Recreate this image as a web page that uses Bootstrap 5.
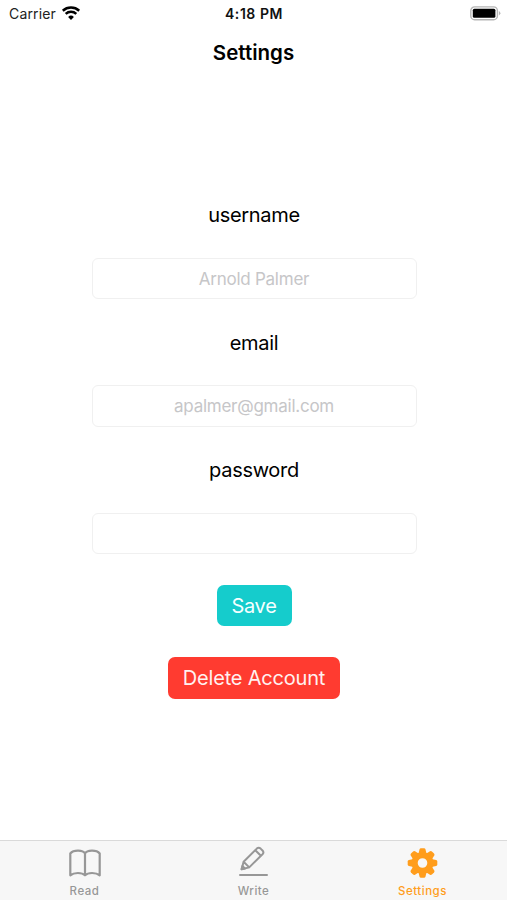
<!DOCTYPE html>
<html lang="en">
<head>
<meta charset="utf-8">
<meta name="viewport" content="width=device-width, initial-scale=1">
<title>Settings</title>
<link href="https://cdn.jsdelivr.net/npm/bootstrap@5.3.0/dist/css/bootstrap.min.css" rel="stylesheet">
<style>
body { font-family: Inter, "Liberation Sans", sans-serif; color: #000; background: #fff; }
.app { height: 900px; overflow: hidden; }
.status-bar { height: 28px; padding: 0 6px 0 9px; font-size: 14px; line-height: 28px; color: #222; }
.carrier { letter-spacing: .15px; }
.clock { margin-left: -2px; font-weight: 600; letter-spacing: .55px; color: #111; }
.title-bar { height: 48px; padding-top: 1px; font-size: 20.5px; font-weight: 600; line-height: 47px; letter-spacing: 0; }
.settings-form { padding: 126.4px 0 0 1px; gap: 30.6px; }
.field-label { height: 24.7px; padding-top: 2px; font-size: 20px; line-height: 23.7px; letter-spacing: -.3px; }
.field-input { width: 325px; height: 41.6px; padding: 1px 8px 0; font-size: 17px; letter-spacing: -.25px; border: 1.5px solid #f0f0f0; border-radius: 6px; }
.field-input::placeholder { color: #c6c6c8; }
.btn-form { height: 41.6px; padding: 1px 14px 0; font-size: 20px; line-height: 41.6px; border: 0; border-radius: 7px; color: #f4ffff; }
.btn-save { width: 75px; background: #15cccc; letter-spacing: -.3px; }
.btn-remove { width: 172px; background: #ff3b30; color: #fff1f0; letter-spacing: -.2px; }
.tab-bar { height: 60px; background: #f7f7f7; border-top: 1px solid #dadada; }
.tab-item { color: #979797; font-size: 11.5px; font-weight: 500; line-height: 14px; letter-spacing: .5px; padding-top: 5px; }
.tab-item svg { width: 36px; height: 36px; margin-bottom: 2px; }
.tab-item.active { color: #ff9d1c; }
</style>
<script src="https://cdn.jsdelivr.net/npm/bootstrap@5.3.0/dist/js/bootstrap.bundle.min.js"></script>
</head>
<body>
<div class="app d-flex flex-column">
  <header>
    <div class="status-bar row g-0">
      <div class="col d-flex align-items-center">
        <span class="carrier">Carrier</span>
        <svg class="ms-1" width="22" height="16" viewBox="0 0 22 16" fill="none" stroke="#000" stroke-width="2.5"><path d="M2.8 4.7a12.2 12.2 0 0 1 16.4 0M5.7 7.9a7.8 7.8 0 0 1 10.6 0"/><path d="M11 13.9l-2.9-3a4.3 4.3 0 0 1 5.8 0z" fill="#000" stroke="none"/></svg>
      </div>
      <div class="col-auto clock">4:18 PM</div>
      <div class="col d-flex align-items-center justify-content-end">
        <svg width="32" height="16" viewBox="0 0 32 16"><g transform="translate(.6 -.7)"><rect x="1.2" y="1.6" width="26.6" height="12.8" rx="3.8" fill="#fff" stroke="#b5b5b5" stroke-width="1.4"/><rect x="3.2" y="3.5" width="22.6" height="9" rx="1.5" fill="#000"/><path d="M29.3 5.8q3 2.2 0 4.4z" fill="#b5b5b5"/></g></svg>
      </div>
    </div>
    <h1 class="title-bar text-center m-0">Settings</h1>
  </header>
  <main class="flex-grow-1">
    <form class="settings-form d-flex flex-column align-items-center">
      <label class="field-label" for="username">username</label>
      <input class="field-input form-control text-center" id="username" type="text" placeholder="Arnold Palmer">
      <label class="field-label" for="email">email</label>
      <input class="field-input form-control text-center" id="email" type="email" placeholder="apalmer@gmail.com">
      <label class="field-label" for="password">password</label>
      <input class="field-input form-control text-center" id="password" type="password">
      <button class="btn btn-form btn-save text-nowrap" type="button">Save</button>
      <button class="btn btn-form btn-remove text-nowrap" type="button">Delete Account</button>
    </form>
  </main>
  <nav class="tab-bar row g-0">
    <a class="tab-item col d-flex flex-column align-items-center text-decoration-none" href="#">
      <svg viewBox="0 0 36 36" fill="none" stroke="currentColor" stroke-width="2.2" stroke-linejoin="round"><path d="M18 7.5C16 3.8 6.5 3.5 3.3 7.5V29.3C7 26.2 15 26.2 18 29.3C21 26.2 29 26.2 32.7 29.3V7.5C29.5 3.5 20 3.8 18 7.5zM18 7.5V29"/></svg>
      <span>Read</span>
    </a>
    <a class="tab-item col d-flex flex-column align-items-center text-decoration-none" href="#">
      <svg viewBox="0 0 36 36" fill="none" stroke="currentColor" stroke-width="2" stroke-linejoin="round" stroke-linecap="round"><path d="M5.6 23.3L7.6 15.8L20.8 2.6Q22.7 .8 24.6 2.6L26.5 4.5Q28.3 6.4 26.5 8.3L13.2 21.4zM19.3 4.2L24.9 9.8M7.6 15.8L13.2 21.4M4 29H31"/><path d="M5.6 23.3L6.4 20L8.9 22.5z" fill="currentColor"/></svg>
      <span>Write</span>
    </a>
    <a class="tab-item active col d-flex flex-column align-items-center text-decoration-none" href="#">
      <svg viewBox="0 0 36 36" fill="currentColor"><defs><path id="tooth" d="M13.4 8L14.5 3.4Q14.8 2.2 16 2.2H19Q20.2 2.2 20.5 3.4L21.6 8z"/></defs><path fill-rule="evenodd" d="M17.5 6.2a10.8 10.8 0 1 0 0 21.6a10.8 10.8 0 1 0 0-21.6zM17.5 12.2a4.8 4.8 0 1 1 0 9.6a4.8 4.8 0 1 1 0-9.6z"/><use href="#tooth"/><use href="#tooth" transform="rotate(45 17.5 17)"/><use href="#tooth" transform="rotate(90 17.5 17)"/><use href="#tooth" transform="rotate(135 17.5 17)"/><use href="#tooth" transform="rotate(180 17.5 17)"/><use href="#tooth" transform="rotate(225 17.5 17)"/><use href="#tooth" transform="rotate(270 17.5 17)"/><use href="#tooth" transform="rotate(315 17.5 17)"/></svg>
      <span>Settings</span>
    </a>
  </nav>
</div>
</body>
</html>
